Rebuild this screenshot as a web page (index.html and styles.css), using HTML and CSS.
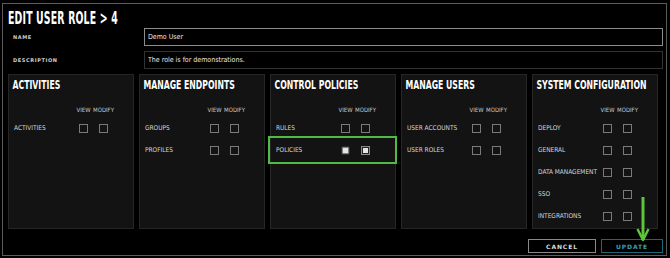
FILE: index.html
```html
<!DOCTYPE html>
<html lang="en">
<head>
    <meta charset="UTF-8">
    <title>Edit User Role</title>
    <link rel="stylesheet" href="styles.css">
</head>
<body>
    <div class="dialog">
        <h1 class="dialog-title">EDIT USER ROLE &gt; 4</h1>

        <div class="field">
            <label class="field-label">NAME</label>
            <input class="field-input active" type="text" value="Demo User">
        </div>
        <div class="field">
            <label class="field-label">DESCRIPTION</label>
            <input class="field-input" type="text" value="The role is for demonstrations.">
        </div>

        <div class="panels">
            <div class="panel">
                <div class="panel-title">ACTIVITIES</div>
                <div class="perm-head"><span></span><span>VIEW</span><span>MODIFY</span></div>
                <div class="perm-row"><span>ACTIVITIES</span><i class="box"></i><i class="box"></i></div>
            </div>
            <div class="panel">
                <div class="panel-title">MANAGE ENDPOINTS</div>
                <div class="perm-head"><span></span><span>VIEW</span><span>MODIFY</span></div>
                <div class="perm-row"><span>GROUPS</span><i class="box"></i><i class="box"></i></div>
                <div class="perm-row"><span>PROFILES</span><i class="box"></i><i class="box"></i></div>
            </div>
            <div class="panel">
                <div class="panel-title">CONTROL POLICIES</div>
                <div class="perm-head"><span></span><span>VIEW</span><span>MODIFY</span></div>
                <div class="perm-row"><span>RULES</span><i class="box"></i><i class="box"></i></div>
                <div class="perm-row marked"><span>POLICIES</span><i class="box on small"></i><i class="box on"></i></div>
            </div>
            <div class="panel">
                <div class="panel-title">MANAGE USERS</div>
                <div class="perm-head"><span></span><span>VIEW</span><span>MODIFY</span></div>
                <div class="perm-row"><span>USER ACCOUNTS</span><i class="box"></i><i class="box"></i></div>
                <div class="perm-row"><span>USER ROLES</span><i class="box"></i><i class="box"></i></div>
            </div>
            <div class="panel">
                <div class="panel-title">SYSTEM CONFIGURATION</div>
                <div class="perm-head"><span></span><span>VIEW</span><span>MODIFY</span></div>
                <div class="perm-row"><span>DEPLOY</span><i class="box"></i><i class="box"></i></div>
                <div class="perm-row"><span>GENERAL</span><i class="box"></i><i class="box"></i></div>
                <div class="perm-row"><span>DATA MANAGEMENT</span><i class="box"></i><i class="box"></i></div>
                <div class="perm-row"><span>SSO</span><i class="box"></i><i class="box"></i></div>
                <div class="perm-row"><span>INTEGRATIONS</span><i class="box"></i><i class="box"></i></div>
            </div>
        </div>

        <div class="actions">
            <button class="btn">CANCEL</button>
            <button class="btn primary">UPDATE</button>
        </div>

        <svg class="pointer" width="16" height="48" viewBox="0 0 16 48">
            <path d="M8 1 V44" stroke="#5cc63a" stroke-width="3" fill="none"/>
            <path d="M2.5 33 L8 44 L13.5 33" stroke="#5cc63a" stroke-width="2.5" fill="none" stroke-linejoin="round"/>
        </svg>
    </div>
</body>
</html>
```

FILE: styles.css
```css
body, html {
    margin: 0;
    padding: 0;
    background-color: #000;
    color: #fff;
    font-family: "DejaVu Sans Condensed", "Liberation Sans", sans-serif;
}
body {
    padding: 3px 3px 2px 2px;
    height: 258px;
    box-sizing: border-box;
    overflow: hidden;
}
.dialog {
    position: relative;
    height: 253px;
    box-sizing: border-box;
    border: 1px solid #5c5c5c;
    padding: 0 3px 0 5px;
}
.dialog-title {
    margin: 4px 0 0 0;
    font-family: "DejaVu Sans Condensed", sans-serif;
    font-weight: bold;
    font-size: 17px;
    line-height: 20px;
    letter-spacing: 0.3px;
    transform: scaleX(0.61);
    transform-origin: left center;
    white-space: nowrap;
}
.field {
    display: flex;
    align-items: center;
    height: 18px;
    margin-bottom: 5px;
}
.field-label {
    width: 136px;
    flex-shrink: 0;
    padding-left: 5px;
    box-sizing: border-box;
    font-family: "DejaVu Sans", sans-serif;
    font-weight: bold;
    font-size: 5px;
    letter-spacing: 0.6px;
    color: #cfcfcf;
}
.field-input {
    flex: 1;
    min-width: 0;
    height: 18px;
    box-sizing: border-box;
    background: #000;
    border: 1px solid #333;
    color: #e8e8e8;
    font-family: inherit;
    font-size: 7px;
    padding: 0 3px;
    outline: none;
}
.field-input.active {
    border-color: #8c8c8c;
}
.panels {
    display: grid;
    grid-template-columns: repeat(5, minmax(0, 1fr));
    gap: 0 5px;
    margin-right: 5px;
}
.panel {
    height: 155px;
    box-sizing: border-box;
    background-color: #131313;
    border: 1px solid #262626;
    padding-top: 3px;
    min-width: 0;
}
.panel-title {
    padding-left: 5px;
    font-family: "DejaVu Sans Condensed", sans-serif;
    font-weight: bold;
    font-size: 12.5px;
    line-height: 14px;
    transform: scaleX(0.69);
    transform-origin: left center;
    white-space: nowrap;
}
.perm-head, .perm-row {
    display: grid;
    grid-template-columns: 59px 9px 9px;
    column-gap: 11px;
    align-items: center;
}
.perm-head {
    margin-top: 13px;
    margin-bottom: 4px;
    height: 8px;
    font-size: 6px;
    color: #c8c8c8;
}
.perm-head span {
    justify-self: center;
    white-space: nowrap;
}
.perm-row {
    height: 22px;
    font-size: 6.5px;
    color: #d6d6d6;
}
.perm-row span {
    padding-left: 5px;
    white-space: nowrap;
}
.perm-row.marked {
    outline: 2px solid #4fba46;
    margin: -1px 0 0 -1px;
    padding-left: 1px;
    height: 24px;
}
.box {
    display: block;
    width: 9px;
    height: 9px;
    box-sizing: border-box;
    border: 1px solid #7a7a7a;
}
.box.on {
    background: #e6e6e6;
    box-shadow: inset 0 0 0 1px #222;
    border-color: #8a8a8a;
}
.box.small {
    transform: scale(0.8);
    box-shadow: none;
    border-color: #555;
}
.actions {
    display: flex;
    justify-content: flex-end;
    gap: 5px;
    margin-top: 10px;
}
.btn {
    height: 14px;
    padding: 0;
    background: #000;
    border: 1px solid #8a8a8a;
    color: #dcdcdc;
    font-family: "DejaVu Sans", sans-serif;
    font-weight: bold;
    font-size: 6px;
    letter-spacing: 0.9px;
    width: 68px;
}
.btn.primary {
    width: 62px;
    border-color: #1f6677;
    color: #3c9fb3;
}
.pointer {
    position: absolute;
    left: 632px;
    top: 192px;
}
```
